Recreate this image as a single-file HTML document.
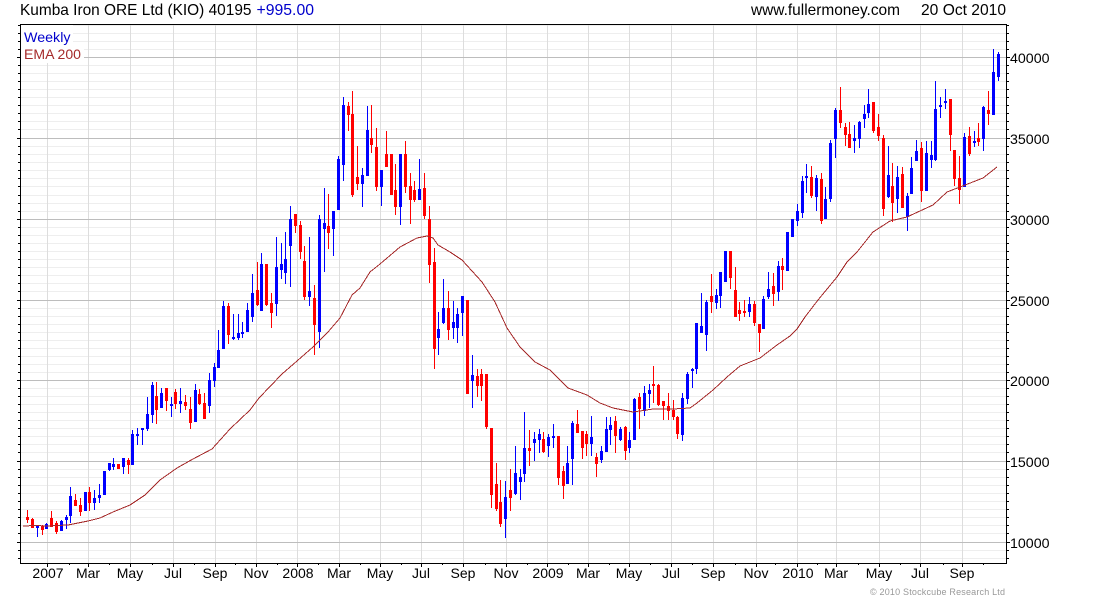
<!DOCTYPE html>
<html>
<head>
<meta charset="utf-8">
<style>
html,body{margin:0;padding:0;background:#fff;width:1100px;height:600px;overflow:hidden}
svg{display:block}
text{font-family:"Liberation Sans",Arial,sans-serif}
</style>
</head>
<body>
<svg width="1100" height="600" viewBox="0 0 1100 600" xmlns="http://www.w3.org/2000/svg">
<rect width="1100" height="600" fill="#fff"/>
<g shape-rendering="crispEdges" fill="none">
<path stroke="#eeeeee" d="M21 25.5H1006M21 33.5H1006M21 41.5H1006M21 49.5H1006M21 65.5H1006M21 73.5H1006M21 81.5H1006M21 89.5H1006M21 97.5H1006M21 105.5H1006M21 113.5H1006M21 121.5H1006M21 129.5H1006M21 146.5H1006M21 154.5H1006M21 162.5H1006M21 170.5H1006M21 178.5H1006M21 186.5H1006M21 195.5H1006M21 203.5H1006M21 211.5H1006M21 227.5H1006M21 235.5H1006M21 243.5H1006M21 251.5H1006M21 259.5H1006M21 267.5H1006M21 275.5H1006M21 283.5H1006M21 291.5H1006M21 308.5H1006M21 316.5H1006M21 324.5H1006M21 332.5H1006M21 340.5H1006M21 348.5H1006M21 356.5H1006M21 364.5H1006M21 372.5H1006M21 388.5H1006M21 396.5H1006M21 404.5H1006M21 412.5H1006M21 420.5H1006M21 428.5H1006M21 436.5H1006M21 444.5H1006M21 452.5H1006M21 469.5H1006M21 477.5H1006M21 485.5H1006M21 493.5H1006M21 501.5H1006M21 509.5H1006M21 517.5H1006M21 525.5H1006M21 533.5H1006M21 550.5H1006M21 558.5H1006"/>
<path stroke="#dddddd" d="M47.5 25V563M88.5 25V563M130.5 25V563M173.5 25V563M215.5 25V563M256.5 25V563M297.5 25V563M339.5 25V563M380.5 25V563M421.5 25V563M463.5 25V563M506.5 25V563M547.5 25V563M588.5 25V563M629.5 25V563M671.5 25V563M713.5 25V563M756.5 25V563M797.5 25V563M836.5 25V563M879.5 25V563M920.5 25V563M962.5 25V563"/>
<path stroke="#bdbdbd" d="M21 57.5H1006M21 138.5H1006M21 219.5H1006M21 300.5H1006M21 380.5H1006M21 461.5H1006M21 542.5H1006"/>
</g>
<rect x="21" y="25" width="52" height="19" fill="#fff"/>
<rect x="21" y="44" width="63" height="19" fill="#fff"/>
<g shape-rendering="crispEdges" fill="none" stroke-width="1">
<path stroke="#ff0000" d="M27.5 510V523M32.5 518V528M42.5 525V535M51.5 511V527M56.5 521V534M75.5 494V506M80.5 498V516M89.5 487V511M118.5 464V469M128.5 458V474M156.5 382V424M166.5 388V411M175.5 389V409M185.5 395V410M190.5 397V429M199.5 389V405M204.5 393V419M228.5 303V344M257.5 262V306M266.5 264V306M271.5 293V328M295.5 214V233M300.5 221V259M304.5 246V300M314.5 285V355M328.5 194V249M348.5 102V131M352.5 91V197M357.5 146V190M371.5 105V153M376.5 128V191M386.5 131V167M391.5 154V195M395.5 164V215M405.5 141V193M410.5 173V224M414.5 181V202M424.5 173V219M429.5 206V283M434.5 248V369M448.5 291V340M467.5 300V394M477.5 369V397M481.5 369V401M486.5 374V429M491.5 428V508M496.5 463V511M500.5 480V527M510.5 469V511M529.5 430V466M543.5 432V453M558.5 436V485M563.5 466V499M577.5 410V433M582.5 431V459M586.5 431V456M596.5 453V477M615.5 416V453M625.5 426V460M639.5 393V429M653.5 366V403M658.5 384V406M663.5 401V420M668.5 393V420M673.5 400V420M677.5 416V439M711.5 274V313M730.5 251V289M735.5 267V317M739.5 302V321M744.5 300V317M754.5 301V326M759.5 324V352M773.5 273V306M782.5 258V290M811.5 166V198M821.5 173V224M840.5 87V128M845.5 123V146M849.5 122V148M873.5 102V133M878.5 114V141M883.5 135V216M892.5 163V222M902.5 167V208M921.5 142V202M950.5 99V151M954.5 150V186M959.5 156V204M969.5 127V156M978.5 123V146M988.5 91V125"/>
<path stroke="#ff0000" stroke-width="3" d="M27.5 517V520M32.5 519V528M42.5 526V530M51.5 518V527M56.5 523V532M75.5 500V506M80.5 505V512M89.5 492V503M118.5 464V469M128.5 460V465M156.5 396V410M166.5 388V401M175.5 392V404M185.5 402V406M190.5 409V423M199.5 394V404M204.5 403V419M228.5 306V335M257.5 290V305M266.5 264V305M271.5 303V313M295.5 214V226M300.5 225V252M304.5 261V297M314.5 298V325M328.5 226V233M348.5 106V115M352.5 114V195M357.5 177V184M371.5 138V145M376.5 147V187M386.5 154V167M391.5 154V195M395.5 190V207M405.5 154V187M410.5 186V200M414.5 190V200M424.5 188V216M429.5 219V265M434.5 262V349M448.5 308V330M467.5 300V394M477.5 376V386M481.5 374V386M486.5 374V427M491.5 428V495M496.5 484V509M500.5 502V524M510.5 490V498M529.5 448V451M543.5 439V452M558.5 436V478M563.5 471V486M577.5 424V433M582.5 431V448M586.5 434V444M596.5 457V464M615.5 421V436M625.5 427V451M639.5 397V409M653.5 384V386M658.5 385V405M663.5 401V406M668.5 406V411M673.5 410V417M677.5 417V434M711.5 296V302M730.5 251V278M735.5 290V317M739.5 310V314M744.5 311V313M754.5 304V323M759.5 324V333M773.5 286V294M782.5 266V270M811.5 177V196M821.5 179V221M840.5 110V123M845.5 127V135M849.5 134V148M873.5 102V131M878.5 127V136M883.5 138V209M892.5 186V203M902.5 174V208M921.5 148V191M950.5 99V135M954.5 150V179M959.5 178V190M969.5 136V154M978.5 138V142M988.5 110V114"/>
<path stroke="#0000ff" d="M37.5 525V537M46.5 523V529M61.5 520V531M66.5 515V529M70.5 487V523M85.5 492V511M94.5 490V510M99.5 484V503M104.5 471V495M109.5 463V471M113.5 458V470M123.5 458V474M132.5 430V465M137.5 428V445M142.5 428V445M147.5 397V431M152.5 382V423M161.5 388V408M171.5 397V417M180.5 388V413M195.5 384V422M209.5 373V413M214.5 363V387M218.5 330V368M223.5 301V349M233.5 314V340M238.5 314V340M242.5 322V338M247.5 303V332M252.5 274V322M261.5 253V311M276.5 237V316M281.5 243V279M285.5 232V284M290.5 206V287M309.5 237V306M319.5 215V348M324.5 188V272M333.5 211V256M338.5 156V210M343.5 97V181M362.5 168V207M367.5 106V176M381.5 170V206M400.5 154V225M419.5 159V200M438.5 312V355M443.5 279V324M453.5 301V339M457.5 308V343M462.5 296V336M472.5 355V408M505.5 481V538M515.5 446V495M520.5 469V500M524.5 412V482M534.5 432V461M539.5 429V453M548.5 434V457M553.5 424V448M567.5 446V484M572.5 421V485M591.5 416V456M601.5 446V463M606.5 417V452M610.5 417V445M620.5 427V441M629.5 432V453M634.5 398V440M644.5 386V416M649.5 384V408M682.5 393V441M687.5 372V404M692.5 368V388M696.5 323V374M701.5 293V333M706.5 300V351M716.5 289V309M720.5 272V308M725.5 251V282M749.5 297V317M763.5 296V329M768.5 272V299M778.5 261V301M787.5 232V271M792.5 219V237M797.5 204V226M802.5 176V218M806.5 164V193M816.5 175V211M825.5 187V219M830.5 140V202M835.5 108V158M854.5 125V153M859.5 121V148M864.5 105V128M868.5 89V118M888.5 146V198M897.5 166V213M907.5 193V231M911.5 157V194M916.5 140V161M926.5 141V191M931.5 141V168M935.5 81V161M940.5 97V118M945.5 89V109M964.5 133V187M974.5 131V147M983.5 106V151M993.5 49V115M998.5 52V81"/>
<path stroke="#0000ff" stroke-width="3" d="M37.5 526V528M46.5 524V529M61.5 521V531M66.5 517V520M70.5 496V516M85.5 492V511M94.5 498V503M99.5 495V498M104.5 471V495M109.5 463V470M113.5 464V467M123.5 458V467M132.5 434V465M137.5 434V436M142.5 428V430M147.5 414V429M152.5 385V415M161.5 393V408M171.5 404V406M180.5 401V404M195.5 390V422M209.5 380V406M214.5 367V381M218.5 350V368M223.5 306V349M233.5 337V339M238.5 333V338M242.5 332V334M247.5 310V332M252.5 293V317M261.5 264V311M276.5 267V304M281.5 264V270M285.5 259V273M290.5 219V246M309.5 291V297M319.5 219V332M324.5 223V229M333.5 211V229M338.5 159V210M343.5 105V165M362.5 175V184M367.5 130V176M381.5 170V187M400.5 154V207M419.5 189V200M438.5 329V338M443.5 308V323M453.5 322V328M457.5 314V328M462.5 296V313M472.5 375V381M505.5 497V519M515.5 473V494M520.5 477V482M524.5 448V474M534.5 439V443M539.5 434V440M548.5 437V446M553.5 436V438M567.5 463V484M572.5 423V459M591.5 437V444M601.5 451V460M606.5 429V452M610.5 425V430M620.5 429V440M629.5 440V448M634.5 399V440M644.5 393V411M649.5 390V394M682.5 398V435M687.5 374V399M692.5 369V371M696.5 323V369M701.5 326V333M706.5 302V335M716.5 295V303M720.5 272V296M725.5 251V282M749.5 304V312M763.5 299V329M768.5 289V297M778.5 266V292M787.5 232V271M792.5 219V237M797.5 211V221M802.5 181V213M806.5 176V178M816.5 178V197M825.5 199V219M830.5 143V199M835.5 110V139M854.5 138V141M859.5 122V139M864.5 114V119M868.5 104V113M888.5 175V197M897.5 177V199M907.5 196V217M911.5 168V194M916.5 151V161M926.5 153V191M931.5 155V160M935.5 109V160M940.5 105V107M945.5 101V103M964.5 137V187M974.5 141V143M983.5 107V139M993.5 72V115M998.5 54V77"/>
<polyline stroke="#a52a2a" points="23,526 35,525.5 47,526 68,525 88,521 100,518 113,512 130,505 145,495 160,480 177,468 193,459 212,449 230,429 250,410 259,398 282,374 297,361 313,347 328,332 340,318 352,295 360,288 370,272 380,264 400,247 417,238 427,236 433,238 438,245 450,252 462,260 482,282 495,302 507,328 520,347 535,362 550,370 568,388 587,395 600,403 613,408 633,412 653,409 673,409 690,408 697,403 713,390 727,377 740,366 760,358 777,345 790,336 797,329 805,317 818,300 837,277 847,262 857,252 873,232 890,221 907,217 933,205 947,192 960,187 983,178 997,167"/>
</g>
<g shape-rendering="crispEdges" fill="none" stroke="#000">
<path d="M20.5 24.5H1006.5V563.5H20.5Z"/>
<path d="M18 25.5H20M18 33.5H20M18 41.5H20M18 49.5H20M17 57.5H20M18 65.5H20M18 73.5H20M18 81.5H20M18 89.5H20M18 97.5H20M18 105.5H20M18 113.5H20M18 121.5H20M18 129.5H20M17 138.5H20M18 146.5H20M18 154.5H20M18 162.5H20M18 170.5H20M18 178.5H20M18 186.5H20M18 195.5H20M18 203.5H20M18 211.5H20M17 219.5H20M18 227.5H20M18 235.5H20M18 243.5H20M18 251.5H20M18 259.5H20M18 267.5H20M18 275.5H20M18 283.5H20M18 291.5H20M17 300.5H20M18 308.5H20M18 316.5H20M18 324.5H20M18 332.5H20M18 340.5H20M18 348.5H20M18 356.5H20M18 364.5H20M18 372.5H20M17 380.5H20M18 388.5H20M18 396.5H20M18 404.5H20M18 412.5H20M18 420.5H20M18 428.5H20M18 436.5H20M18 444.5H20M18 452.5H20M17 461.5H20M18 469.5H20M18 477.5H20M18 485.5H20M18 493.5H20M18 501.5H20M18 509.5H20M18 517.5H20M18 525.5H20M18 533.5H20M17 542.5H20M18 550.5H20M18 558.5H20"/>
<path d="M1007 25.5H1009M1007 33.5H1009M1007 41.5H1009M1007 49.5H1009M1007 57.5H1010M1007 65.5H1009M1007 73.5H1009M1007 81.5H1009M1007 89.5H1009M1007 97.5H1009M1007 105.5H1009M1007 113.5H1009M1007 121.5H1009M1007 129.5H1009M1007 138.5H1010M1007 146.5H1009M1007 154.5H1009M1007 162.5H1009M1007 170.5H1009M1007 178.5H1009M1007 186.5H1009M1007 195.5H1009M1007 203.5H1009M1007 211.5H1009M1007 219.5H1010M1007 227.5H1009M1007 235.5H1009M1007 243.5H1009M1007 251.5H1009M1007 259.5H1009M1007 267.5H1009M1007 275.5H1009M1007 283.5H1009M1007 291.5H1009M1007 300.5H1010M1007 308.5H1009M1007 316.5H1009M1007 324.5H1009M1007 332.5H1009M1007 340.5H1009M1007 348.5H1009M1007 356.5H1009M1007 364.5H1009M1007 372.5H1009M1007 380.5H1010M1007 388.5H1009M1007 396.5H1009M1007 404.5H1009M1007 412.5H1009M1007 420.5H1009M1007 428.5H1009M1007 436.5H1009M1007 444.5H1009M1007 452.5H1009M1007 461.5H1010M1007 469.5H1009M1007 477.5H1009M1007 485.5H1009M1007 493.5H1009M1007 501.5H1009M1007 509.5H1009M1007 517.5H1009M1007 525.5H1009M1007 533.5H1009M1007 542.5H1010M1007 550.5H1009M1007 558.5H1009"/>
<path d="M47.5 564V567M88.5 564V567M130.5 564V567M173.5 564V567M215.5 564V567M256.5 564V567M297.5 564V567M339.5 564V567M380.5 564V567M421.5 564V567M463.5 564V567M506.5 564V567M547.5 564V567M588.5 564V567M629.5 564V567M671.5 564V567M713.5 564V567M756.5 564V567M797.5 564V567M836.5 564V567M879.5 564V567M920.5 564V567M962.5 564V567M69.5 564V565M109.5 564V565M152.5 564V565M194.5 564V565M235.5 564V565M277.5 564V565M318.5 564V565M360.5 564V565M401.5 564V565M442.5 564V565M485.5 564V565M527.5 564V565M568.5 564V565M609.5 564V565M650.5 564V565M692.5 564V565M735.5 564V565M775.5 564V565M817.5 564V565M858.5 564V565M900.5 564V565M943.5 564V565M983.5 564V565"/>
</g>
<text x="20" y="15" font-size="16" fill="#000" textLength="231.5" lengthAdjust="spacingAndGlyphs">Kumba Iron ORE Ltd (KIO) 40195</text>
<text x="256.5" y="15" font-size="16" fill="#0000cc" textLength="57.5" lengthAdjust="spacingAndGlyphs">+995.00</text>
<text x="751" y="15" font-size="16" fill="#000" textLength="149" lengthAdjust="spacingAndGlyphs">www.fullermoney.com</text>
<text x="921" y="15" font-size="16" fill="#000" textLength="85" lengthAdjust="spacingAndGlyphs">20 Oct 2010</text>
<text x="24" y="42" font-size="14" fill="#0000cc" textLength="46.5" lengthAdjust="spacingAndGlyphs">Weekly</text>
<text x="24" y="59" font-size="14" fill="#a52a2a" textLength="57" lengthAdjust="spacingAndGlyphs">EMA 200</text>
<g font-size="14" fill="#000">
<text x="1010" y="63" textLength="39.5" lengthAdjust="spacingAndGlyphs">40000</text>
<text x="1010" y="144" textLength="39.5" lengthAdjust="spacingAndGlyphs">35000</text>
<text x="1010" y="225" textLength="39.5" lengthAdjust="spacingAndGlyphs">30000</text>
<text x="1010" y="306" textLength="39.5" lengthAdjust="spacingAndGlyphs">25000</text>
<text x="1010" y="386" textLength="39.5" lengthAdjust="spacingAndGlyphs">20000</text>
<text x="1010" y="467" textLength="39.5" lengthAdjust="spacingAndGlyphs">15000</text>
<text x="1010" y="548" textLength="39.5" lengthAdjust="spacingAndGlyphs">10000</text>
</g>
<g font-size="14" fill="#000" text-anchor="middle">
<text x="48" y="578">2007</text>
<text x="88" y="578">Mar</text>
<text x="130" y="578">May</text>
<text x="173" y="578">Jul</text>
<text x="215" y="578">Sep</text>
<text x="256" y="578">Nov</text>
<text x="298" y="578">2008</text>
<text x="339" y="578">Mar</text>
<text x="380" y="578">May</text>
<text x="421" y="578">Jul</text>
<text x="463" y="578">Sep</text>
<text x="506" y="578">Nov</text>
<text x="548" y="578">2009</text>
<text x="588" y="578">Mar</text>
<text x="629" y="578">May</text>
<text x="671" y="578">Jul</text>
<text x="713" y="578">Sep</text>
<text x="756" y="578">Nov</text>
<text x="798" y="578">2010</text>
<text x="836" y="578">Mar</text>
<text x="879" y="578">May</text>
<text x="920" y="578">Jul</text>
<text x="962" y="578">Sep</text>
</g>
<text x="870" y="595" font-size="9" fill="#999" textLength="135" lengthAdjust="spacing">© 2010 Stockcube Research Ltd</text>
</svg>
</body>
</html>
